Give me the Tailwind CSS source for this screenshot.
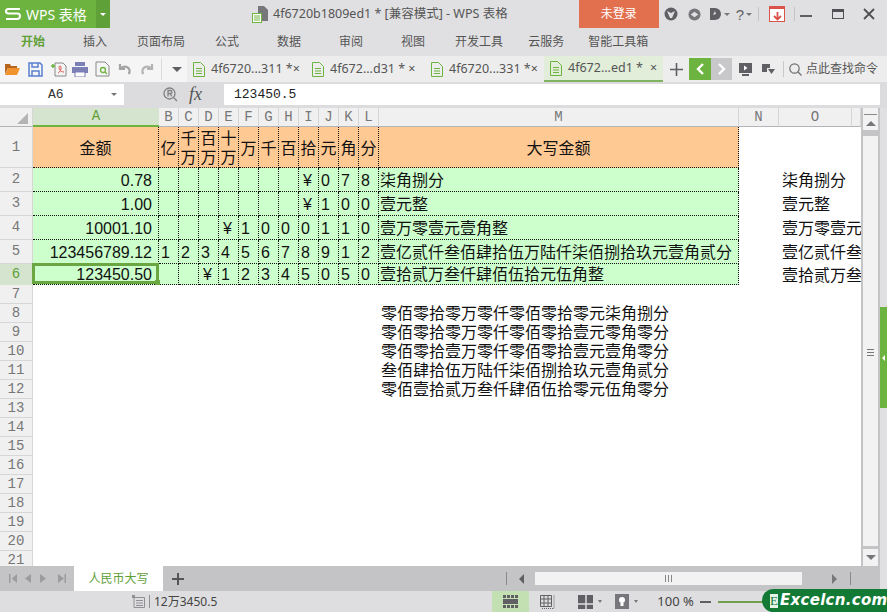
<!DOCTYPE html>
<html lang="zh-CN">
<head>
  <meta charset="UTF-8">
  <title>WPS 表格</title>
  <script src="https://cdn.jsdelivr.net/npm/@tailwindcss/browser@4"></script>
</head>
<body class="w-[887px] h-[612px] overflow-hidden bg-[#e0e0e2] font-['Liberation_Sans','Noto_Sans_CJK_SC',sans-serif]">
<div class="relative flex flex-col h-[612px]">

  <!-- title bar -->
  <div class="flex items-center h-[28px] shrink-0">
    <div class="flex items-center w-[96px] h-full bg-[#6cb33f] text-white">
      <svg class="ml-[5px]" width="16" height="12" viewBox="0 0 16 12" fill="none" stroke="#fff" stroke-width="2"><path d="M15 1H3.500Q1 1 1 3.200T3.500 5.500H12.500Q15 5.500 15 8T12.500 11H1"/></svg>
      <span class="ml-[5px] text-[14px] font-['Noto_Sans','Noto_Sans_CJK_SC',sans-serif] whitespace-nowrap">WPS 表格</span>
    </div>
    <div class="flex items-center justify-center w-[14px] h-full bg-[#5fa038]">
      <div class="w-0 h-0 border-x-[3px] border-x-transparent border-t-[3px] border-t-white"></div>
    </div>
    <svg class="ml-[142px]" width="16" height="18" viewBox="0 0 16 18">
      <path d="M6 1h6l4 4v11H6z" fill="#77777b"/><rect x="0.500" y="8.500" width="9" height="9" fill="#fff" stroke="#6cb33f"/><path d="M2 11h6M2 13h6M2 15h6" stroke="#6cb33f"/>
    </svg>
    <span class="ml-[5px] text-[12.500px] text-[#555] font-['Noto_Sans','Noto_Sans_CJK_SC',sans-serif] whitespace-nowrap">4f6720b1809ed1 * [兼容模式] - WPS 表格</span>
    <div class="flex-1"></div>
    <div class="flex items-center justify-center w-[80px] h-full bg-[#e2704f] text-white text-[12px]">未登录</div>
    <svg class="ml-[5px]" width="14" height="14" viewBox="0 0 14 14"><circle cx="7" cy="7" r="6.500" fill="#606064"/><path d="M3 4l4 2 4-2-3 7H6z" fill="#e0e0e2"/></svg>
    <svg class="ml-[10px]" width="13" height="13" viewBox="0 0 14 14"><circle cx="7" cy="7" r="6.500" fill="#77777b"/><path d="M3 7l4-3 4 3-4 3z" fill="#e0e0e2"/></svg>
    <svg class="ml-[8px]" width="13" height="14" viewBox="0 0 13 14"><path d="M1 1h5a6 6 0 0 1 0 12H1z" fill="#606064"/><path d="M4 8l2-4 1 3z" fill="#e0e0e2"/></svg>
    <div class="ml-[2px] mt-[1px] w-0 h-0 border-x-[3px] border-x-transparent border-t-[3px] border-t-[#77777b]"></div>
    <span class="ml-[6px] text-[15px] leading-none text-[#606064]">?</span>
    <div class="ml-[2px] mt-[1px] w-0 h-0 border-x-[3px] border-x-transparent border-t-[3px] border-t-[#77777b]"></div>
    <div class="ml-[6px] w-px h-[14px] bg-[#c4c4c6]"></div>
    <div class="ml-[10px] flex items-end justify-center w-[16px] h-[16px] bg-white border border-[#d9534a] border-t-[3px]">
      <svg width="9" height="10" viewBox="0 0 9 10" fill="none" stroke="#d9534a" stroke-width="1.800"><path d="M4.500 1v7M1 5l3.500 3.500L8 5"/></svg>
    </div>
    <div class="ml-[9px] w-px h-[14px] bg-[#c4c4c6]"></div>
    <div class="ml-[5px] w-[12px] h-[2px] mt-[3px] bg-[#606064]"></div>
    <div class="ml-[20px] w-[12px] h-[10px] border border-[#505054] border-t-[3px]"></div>
    <svg class="ml-[19px] mr-[12px]" width="12" height="12" viewBox="0 0 12 12" stroke="#505054" stroke-width="1.800"><path d="M1 1l10 10M11 1L1 11"/></svg>
  </div>

  <!-- menu row -->
  <div class="flex items-center h-[28px] shrink-0 pl-[21px] text-[12px] text-[#555] whitespace-nowrap">
    <span class="font-bold text-[#5fa038]">开始</span>
    <span class="ml-[38px]">插入</span>
    <span class="ml-[30px]">页面布局</span>
    <span class="ml-[30px]">公式</span>
    <span class="ml-[38px]">数据</span>
    <span class="ml-[38px]">审阅</span>
    <span class="ml-[38px]">视图</span>
    <span class="ml-[30px]">开发工具</span>
    <span class="ml-[25px]">云服务</span>
    <span class="ml-[24px]">智能工具箱</span>
  </div>

  <!-- toolbar and document tabs -->
  <div class="flex items-center h-[26px] shrink-0 bg-[#ededed] text-[12px] text-[#555] font-['Noto_Sans','Noto_Sans_CJK_SC',sans-serif] whitespace-nowrap">
    <div class="flex items-center h-full w-[187px] bg-[#f5f5f5]">
      <svg class="ml-[5px]" width="15" height="12" viewBox="0 0 15 12"><path d="M0 1h5l1 2h6v2H3L0 11z" fill="#b5651d"/><path d="M3 5h12l-3 7H0z" fill="#f0922e"/></svg>
      <svg class="ml-[8px]" width="15" height="15" viewBox="0 0 15 15" fill="none" stroke="#5a7fd0" stroke-width="1.500"><path d="M1 1h11l2 2v11H1z"/><path d="M4 1v4h6V1M4 14V9h7v5"/></svg>
      <svg class="ml-[8px]" width="16" height="15" viewBox="0 0 16 15" fill="none"><path d="M4 1h8l3 3v10H4z" stroke="#888"/><path d="M0 4h4M2 2v4" stroke="#6cb33f" stroke-width="1.500"/><path d="M7 11c3-1 4-7 2-7s-1 6 4 6" stroke="#d9534a"/></svg>
      <svg class="ml-[5px]" width="16" height="15" viewBox="0 0 16 15"><rect x="3" y="0" width="10" height="4" fill="#7a7fb5"/><rect x="0" y="5" width="16" height="6" fill="#7a7fb5"/><rect x="3" y="10" width="10" height="5" fill="#fff" stroke="#7a7fb5"/></svg>
      <svg class="ml-[7px]" width="15" height="16" viewBox="0 0 15 16" fill="none" stroke="#888"><path d="M1 1h9l4 4v10H1z"/><circle cx="8" cy="9" r="2.500" stroke="#6cb33f" stroke-width="1.300"/><path d="M10 11l2 2" stroke="#6cb33f" stroke-width="1.300"/></svg>
      <svg class="ml-[8px]" width="14" height="12" viewBox="0 0 14 12" fill="none" stroke="#a4a4a6" stroke-width="2.200"><path d="M2 1v5h5"/><path d="M2.500 6a5 5 0 0 1 9 1c.4 1.500 0 3-1 4"/></svg>
      <svg class="ml-[8px]" width="14" height="12" viewBox="0 0 14 12" fill="none" stroke="#b4b4b6" stroke-width="2.200"><path d="M12 1v5H7"/><path d="M11.500 6a5 5 0 0 0-9 1c-.4 1.500 0 3 1 4"/></svg>
      <div class="ml-[7px] w-px h-[22px] bg-[#dcdcdc]"></div>
      <div class="ml-[10px] w-0 h-0 border-x-[5px] border-x-transparent border-t-[5px] border-t-[#606064]"></div>
    </div>
    <div class="flex items-center h-full w-[124px] pl-[5px]">
      <svg width="14" height="15" viewBox="0 0 14 15" fill="none" stroke="#6cb33f"><path d="M1.500 .5h7l4 4v10h-11z"/><path d="M4 6.500h6M4 9h6M4 11.500h6"/></svg>
      <span class="ml-[5px] text-[12.500px]">4f6720...311 *×</span>
    </div>
    <div class="flex items-center h-full w-[119px]">
      <svg width="14" height="15" viewBox="0 0 14 15" fill="none" stroke="#6cb33f"><path d="M1.500 .5h7l4 4v10h-11z"/><path d="M4 6.500h6M4 9h6M4 11.500h6"/></svg>
      <span class="ml-[5px] text-[12.500px]">4f672...d31 * ×</span>
    </div>
    <div class="flex items-center h-full w-[114px]">
      <svg width="14" height="15" viewBox="0 0 14 15" fill="none" stroke="#6cb33f"><path d="M1.500 .5h7l4 4v10h-11z"/><path d="M4 6.500h6M4 9h6M4 11.500h6"/></svg>
      <span class="ml-[5px] text-[12.500px]">4f6720...331 *×</span>
    </div>
    <div class="flex items-center h-full w-[119px] pl-[5px] bg-[#e2eeda] border-b-2 border-[#7fb35f]">
      <svg width="14" height="15" viewBox="0 0 14 15" fill="none" stroke="#6cb33f"><path d="M1.500 .5h7l4 4v10h-11z"/><path d="M4 6.500h6M4 9h6M4 11.500h6"/></svg>
      <span class="ml-[5px] text-[12.500px]">4f672...ed1 *</span>
      <span class="ml-[7px] text-[12.500px]">×</span>
    </div>
    <svg class="ml-[7px]" width="13" height="13" viewBox="0 0 13 13" stroke="#606064" stroke-width="1.600"><path d="M6.500 0v13M0 6.500h13"/></svg>
    <div class="ml-[6px] flex items-center justify-center w-[22px] h-[22px] bg-[#6cb33f]">
      <svg width="8" height="12" viewBox="0 0 8 12" fill="none" stroke="#fff" stroke-width="2.400"><path d="M7 1L2 6l5 5"/></svg>
    </div>
    <div class="flex items-center justify-center w-[21px] h-[22px] bg-[#c8c8ca]">
      <svg width="8" height="12" viewBox="0 0 8 12" fill="none" stroke="#fff" stroke-width="2.400"><path d="M1 1l5 5-5 5"/></svg>
    </div>
    <svg class="ml-[7px]" width="13" height="13" viewBox="0 0 13 13"><rect width="13" height="10" fill="#606064"/><path d="M5 2.500l3.500 2.500L5 7.500z" fill="#fff"/><rect x="3" y="11" width="7" height="2" fill="#606064"/></svg>
    <svg class="ml-[10px]" width="13" height="11" viewBox="0 0 13 11"><path d="M0 0h8v4H5v4H0z" fill="#606064"/><path d="M6 5h7l-3.500 5z" fill="#606064"/></svg>
    <div class="ml-[8px] w-px h-[16px] bg-[#c8c8ca]"></div>
    <svg class="ml-[5px]" width="13" height="13" viewBox="0 0 13 13" fill="none" stroke="#707074" stroke-width="1.200"><circle cx="5.500" cy="5.500" r="4.700"/><path d="M9 9l3.500 3.500"/></svg>
    <span class="ml-[4px] text-[12px]">点此查找命令</span>
  </div>

  <!-- formula bar -->
  <div class="flex items-center h-[26px] shrink-0 bg-[#dcdcde] pb-[1px]">
    <div class="flex items-center w-[124px] h-[21px] bg-white">
      <span class="ml-[48px] font-['Liberation_Mono',monospace] text-[13px] text-[#333]">A6</span>
      <div class="ml-[47px] w-0 h-0 border-x-[3px] border-x-transparent border-t-[3px] border-t-[#777]"></div>
    </div>
    <svg class="ml-[39px]" width="15" height="15" viewBox="0 0 15 15" fill="none" stroke="#808084" stroke-width="1.300"><circle cx="6.500" cy="6.500" r="5.500"/><path d="M10.500 10.500l3.500 3.500M5 9.500v-6h2.500a1.500 1.500 0 0 1 0 3H5M7.500 6.500l1 3"/></svg>
    <span class="ml-[11px] w-[35px] font-['Liberation_Serif',serif] italic text-[18px] text-[#555]">fx</span>
    <div class="flex items-center w-[656px] h-[21px] bg-white">
      <span class="ml-[10px] font-['Liberation_Mono',monospace] text-[13px] text-[#222]">123450.5</span>
    </div>
  </div>

  <!-- sheet area -->
  <div class="flex h-[458px] shrink-0 bg-[#e0e0e2]">
    <div id="sheet" class="grid grid-cols-[33px_126px_repeat(11,20px)_360px_40px_73px_9px] grid-rows-[19px_41px_24px_24px_24px_24px_21px_repeat(15,19px)] w-[861px] h-[458px] bg-white overflow-hidden text-[16px] leading-[19px] text-[#111]"></div>
    <!-- vertical scrollbar -->
    <div class="flex flex-col items-center w-[19px] h-full border-x-2 border-[#c4c4c6] bg-[#f2f2f2]">
      <div class="flex items-center justify-center w-full h-[8px] mt-[2px]"><div class="w-[13px] h-px bg-[#8a8a8c]"></div></div>
      <div class="mt-[3px] w-0 h-0 border-x-[5px] border-x-transparent border-b-[5px] border-b-[#77777b]"></div>
      <div class="w-full h-[6px] mt-[4px] bg-[#c4c4c6]"></div>
      <div class="flex-1 w-full flex flex-col items-center pt-[213px] gap-[2px]">
        <div class="w-[7px] h-px bg-[#77777b]"></div>
        <div class="w-[7px] h-px bg-[#77777b]"></div>
        <div class="w-[7px] h-px bg-[#77777b]"></div>
      </div>
      <div class="w-full h-[3px] bg-[#c4c4c6]"></div>
      <div class="w-0 h-0 my-[6px] border-x-[5px] border-x-transparent border-t-[5px] border-t-[#77777b]"></div>
    </div>
    <div class="flex flex-col w-[7px] h-full">
      <div class="h-[199px]"></div>
      <div class="flex items-center h-[101px] bg-[#6cb33f]">
        <div class="ml-[2px] w-0 h-0 border-y-[3px] border-y-transparent border-r-[3px] border-r-white"></div>
      </div>
    </div>
  </div>

  <!-- sheet tabs and horizontal scrollbar -->
  <div class="flex items-center w-[880px] h-[25px] shrink-0 bg-[#c4c4c6]">
    <svg class="ml-[9px]" width="57" height="11" viewBox="0 0 57 11" fill="#9c9c9e"><path d="M0 1h1.500v9H0zM8 1v9L3 5.500zM22 1v9l-6-4.500zM31 1v9l6-4.500zM49 1v9l6-4.500zM55.500 1H57v9h-1.500z"/></svg>
    <div class="flex items-center justify-center ml-[8px] w-[89px] h-full bg-white text-[12px] text-[#5fa038]">人民币大写</div>
    <svg class="ml-[9px]" width="12" height="12" viewBox="0 0 12 12" stroke="#555" stroke-width="2"><path d="M6 0v12M0 6h12"/></svg>
    <div class="ml-[322px] w-px h-[13px] bg-[#8a8a8c]"></div>
    <div class="ml-[12px] w-0 h-0 border-y-[5px] border-y-transparent border-r-[5px] border-r-[#606064]"></div>
    <div class="flex items-center justify-center ml-[11px] w-[267px] h-[13px] bg-[#f2f2f2] gap-[2px]">
      <div class="w-px h-[7px] bg-[#888]"></div>
      <div class="w-px h-[7px] bg-[#888]"></div>
      <div class="w-px h-[7px] bg-[#888]"></div>
    </div>
    <div class="ml-[30px] w-0 h-0 border-y-[5px] border-y-transparent border-l-[5px] border-l-[#77777b]"></div>
    <div class="ml-[13px] w-px h-[13px] bg-[#8a8a8c]"></div>
  </div>

  <!-- status bar -->
  <div class="flex items-center h-[21px] shrink-0 bg-[#dedee0] text-[12px] text-[#444] font-['Noto_Sans','Noto_Sans_CJK_SC',sans-serif] whitespace-nowrap">
    <svg class="ml-[132px]" width="13" height="13" viewBox="0 0 13 13" fill="none" stroke="#909094"><path d="M2 2.500h10.500v10H2z"/><path d="M4 5.500h7M4 8h7M4 10.500h7"/><path d="M0 0h3v3H0z" fill="#909094" stroke="none"/></svg>
    <div class="ml-[4px] w-px h-[13px] bg-[#909094]"></div>
    <span class="ml-[4px]">12万3450.5</span>
    <div class="flex items-center justify-center ml-[275px] w-[37px] h-full bg-[#c3e0b3]">
      <svg width="15" height="13" viewBox="0 0 15 13"><rect width="15" height="13" fill="#606064"/><path d="M0 3.500h15M0 9.500h15" stroke="#c3e0b3"/><path d="M3.500 0v3M7.500 0v3M11.500 0v3M3.500 10v3M7.500 10v3M11.500 10v3" stroke="#c3e0b3"/></svg>
    </div>
    <svg class="ml-[11px]" width="15" height="14" viewBox="0 0 15 14" fill="none" stroke="#606064"><path d="M.5.500h11v11H.500zM4 .5v11M8 .5v11M.5 4h11M.5 8h11"/><path d="M14 .5v13H1" stroke-dasharray="1 1"/></svg>
    <svg class="ml-[23px]" width="15" height="14" viewBox="0 0 15 14"><rect width="15" height="14" fill="#606064"/><path d="M8 0v9H0M8 9h7M8 9v5" stroke="#dedee0" stroke-width="1.500" fill="none"/></svg>
    <div class="ml-[5px] w-0 h-0 border-x-[2.500px] border-x-transparent border-t-[3px] border-t-[#77777b]"></div>
    <svg class="ml-[13px]" width="14" height="15" viewBox="0 0 14 15"><rect width="14" height="15" fill="#77777b"/><circle cx="7" cy="6" r="3" fill="#fff"/><rect x="5.500" y="9" width="3" height="3" fill="#fff"/></svg>
    <div class="ml-[5px] w-0 h-0 border-x-[2.500px] border-x-transparent border-t-[3px] border-t-[#77777b]"></div>
    <span class="ml-[19px] text-[13px]">100 %</span>
    <div class="ml-[6px] w-[11px] h-[2px] bg-[#606064]"></div>
    <div class="ml-[7px] w-[50px] h-[2px] bg-[#6f9f50]"></div>
  </div>

  <!-- watermark over the status bar -->
  <div class="absolute right-0 bottom-0 flex items-center w-[125px] h-[23px] rounded-l-full rounded-r-[10px] bg-[#127a35] whitespace-nowrap">
    <span class="flex items-center justify-center ml-[8px] w-[14px] h-[14px] bg-[#e8f3e8] text-[#127a35] text-[13px] leading-none font-['Liberation_Serif',serif]">E</span>
    <span class="ml-[2px] text-white text-[15px] font-bold italic tracking-[0.3px] font-['DejaVu_Sans',sans-serif]">Excelcn.com</span>
  </div>
</div>

<script>
  const sheet = document.getElementById("sheet");
  const hdr = "flex items-center justify-center bg-[#f0f0f0] border-r border-b border-[#d6d6d6] font-['Liberation_Mono',monospace] text-[14px] text-[#777]";
  const hdrTop = "flex items-center justify-center bg-[#f0f0f0] border-r border-b border-r-[#d6d6d6] border-b-[#b4b4b6] font-['Liberation_Mono',monospace] text-[14px] text-[#777]";
  const hdrOn = "flex items-center justify-center bg-[#d5e4ce] border-r border-[#d5e4ce] font-['Liberation_Mono',monospace] text-[14px] text-[#5fa038]";
  const hdrLeft = "col-start-1 flex items-center justify-center bg-[#f0f0f0] border-r border-b border-[#d6d6d6] font-['Liberation_Mono',monospace] text-[14px] text-[#777]";
  const colOn = "flex items-center justify-center bg-[#d5e4ce] border-b-2 border-[#6cb33f] font-['Liberation_Mono',monospace] text-[14px] text-[#5fa038]";
  const head = "flex items-center justify-center text-center pt-[2px] bg-[#ffc993] border-r border-b border-dotted border-[#111]";
  const num = "flex items-center justify-end pt-[1px] pr-[6px] bg-[#ccffcc] border-r border-b border-dotted border-[#111]";
  const numOn = "relative flex items-center justify-end pr-[6px] bg-[#ccffcc] border-r border-b border-dotted border-[#111]";
  const digit = "flex items-center pt-[1px] pl-[2px] bg-[#ccffcc] border-r border-b border-dotted border-[#111]";
  const yen = "flex items-center pt-[1px] pl-[4px] bg-[#ccffcc] border-r border-b border-dotted border-[#111]";
  const words = "flex items-center pt-[1px] pl-[1px] whitespace-nowrap bg-[#ccffcc] border-r border-b border-dotted border-[#111]";
  const plain = "flex items-center pt-[1px] pl-[3px] whitespace-nowrap";
  const loose = "col-start-14 flex items-center pl-[2px] whitespace-nowrap";

  function add(cls, text) {
    const d = document.createElement("div");
    d.className = cls;
    d.textContent = text || "";
    sheet.appendChild(d);
    return d;
  }

  // column headers, the corner cell has the select-all triangle
  add(hdrTop).innerHTML = '<svg class="ml-[12px] mt-[2px]" width="11" height="11" viewBox="0 0 11 11"><path d="M11 0v11H0z" fill="#b4b4b6"/></svg>';
  add(colOn, "A");
  ["B","C","D","E","F","G","H","I","J","K","L","M","N","O",""].forEach(c => add(hdrTop, c));

  // row 1
  add(hdr, "1");
  ["金额","亿","千万","百万","十万","万","千","百","拾","元","角","分","大写金额"].forEach(t => add(head, t));
  add(""); add(""); add("");

  // rows 2 to 6: amount, one character per column B to L, words, copy in column O
  const rows = [
    ["0.78", "       ¥078", "柒角捌分"],
    ["1.00", "       ¥100", "壹元整"],
    ["10001.10", "   ¥1000110", "壹万零壹元壹角整"],
    ["123456789.12", "12345678912", "壹亿贰仟叁佰肆拾伍万陆仟柒佰捌拾玖元壹角贰分"],
    ["123450.50", "  ¥12345050", "壹拾贰万叁仟肆佰伍拾元伍角整"],
  ];
  rows.forEach((r, i) => {
    const active = i === 4;
    add(active ? hdrOn : hdr, String(i + 2));
    const amount = add(active ? numOn : num, r[0]);
    if (active) {
      const frame = document.createElement("div");
      frame.className = "absolute -top-px -left-px w-[127px] h-[21px] border-[3px] border-[#6aa642]";
      const handle = document.createElement("div");
      handle.className = "absolute -right-[4px] -bottom-[4px] w-[5px] h-[5px] bg-[#6aa642]";
      frame.appendChild(handle);
      amount.appendChild(frame);
    }
    r[1].split("").forEach(ch => add(ch === "¥" ? yen : digit, ch.trim()));
    add(words, r[2]);
    add("");
    add(plain, r[2]);
    add("");
  });

  // rows 7 to 21, with the loose text block starting in column M
  const lines = {
    8: "零佰零拾零万零仟零佰零拾零元柒角捌分",
    9: "零佰零拾零万零仟零佰零拾壹元零角零分",
    10: "零佰零拾壹万零仟零佰零拾壹元壹角零分",
    11: "叁佰肆拾伍万陆仟柒佰捌拾玖元壹角贰分",
    12: "零佰壹拾贰万叁仟肆佰伍拾零元伍角零分",
  };
  for (let n = 7; n <= 21; n++) {
    add(hdrLeft, String(n));
    add(loose, lines[n]);
  }
</script>
</body>
</html>
